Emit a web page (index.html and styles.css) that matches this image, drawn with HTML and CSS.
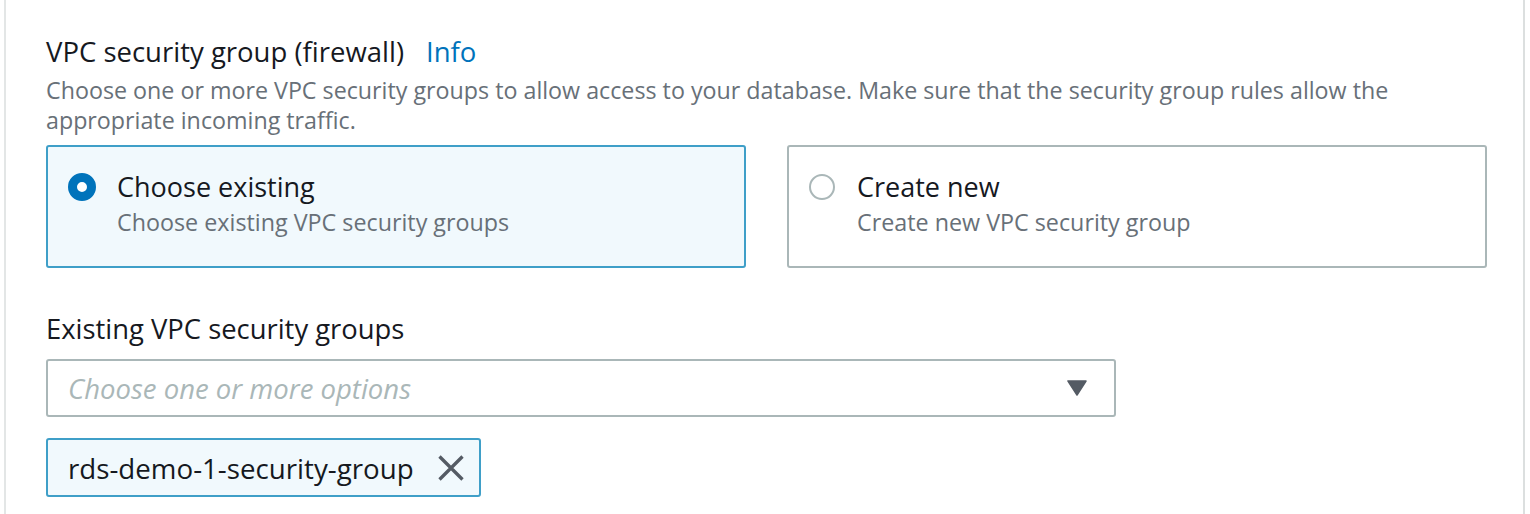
FILE: index.html
```html
<!DOCTYPE html>
<html>
<head>
<meta charset="utf-8">
<link rel="stylesheet" href="styles.css">
</head>
<body>
<div class="panel">
  <div class="header">
    <div class="title-row">
      <span class="title">VPC security group (firewall)</span>
      <a class="info">Info</a>
    </div>
    <div class="desc">Choose one or more VPC security groups to allow access to your database. Make sure that the security group rules allow the appropriate incoming traffic.</div>
  </div>
  <div class="tiles">
    <div class="tile selected">
      <span class="radio on"></span>
      <div class="tile-text">
        <div class="tile-title">Choose existing</div>
        <div class="tile-sub">Choose existing VPC security groups</div>
      </div>
    </div>
    <div class="tile">
      <span class="radio"></span>
      <div class="tile-text">
        <div class="tile-title">Create new</div>
        <div class="tile-sub">Create new VPC security group</div>
      </div>
    </div>
  </div>
  <div class="field">
    <div class="label">Existing VPC security groups</div>
    <div class="select">
      <span class="placeholder">Choose one or more options</span>
      <svg class="caret" width="20" height="16" viewBox="0 0 20 16"><path d="M1 1 H19 L10 15 Z" fill="#545b64" stroke="#545b64" stroke-width="1.5" stroke-linejoin="round"/></svg>
    </div>
    <div class="tokens">
      <div class="token">
        <span class="token-text">rds-demo-1-security-group</span>
        <svg class="dismiss" width="26" height="26" viewBox="0 0 26 26"><path d="M1.5 1.5 L24.5 24.5 M24.5 1.5 L1.5 24.5" stroke="#545b64" stroke-width="3.3" fill="none"/></svg>
      </div>
    </div>
  </div>
</div>
</body>
</html>
```

FILE: styles.css
```css
html, body {
  margin: 0;
  padding: 0;
  background: #ffffff;
}
body {
  font-family: "Open Sans", "Noto Sans", sans-serif;
  color: #16191f;
}
.panel {
  margin-left: 4px;
  width: 1521px;
  height: 514px;
  box-sizing: border-box;
  border-left: 2px solid #e3e6e6;
  border-right: 2px solid #dcdfdf;
  padding: 34px 38px 0 40px;
}
.title-row {
  display: flex;
  align-items: baseline;
  gap: 22px;
  line-height: 36px;
}
.title {
  font-size: 27.5px;
  color: #16191f;
}
.info {
  font-size: 27.5px;
  color: #0073bb;
}
.desc {
  font-size: 23.25px;
  line-height: 30px;
  color: #687078;
  margin-top: 5px;
}
.tiles {
  display: grid;
  grid-template-columns: 700px 700px;
  column-gap: 41px;
  margin-top: 10px;
}
.tile {
  box-sizing: border-box;
  height: 123px;
  border: 2px solid #aab7b8;
  border-radius: 3px;
  display: flex;
  align-items: flex-start;
  padding: 25px 20px 0 20px;
  background: #ffffff;
}
.tile.selected {
  border-color: #3f9fc8;
  background: #f1f9fd;
}
.radio {
  flex: none;
  box-sizing: border-box;
  width: 26px;
  height: 26px;
  border-radius: 50%;
  border: 2px solid #aab7b8;
  background: #fff;
  margin-top: 2px;
  margin-right: 22px;
}
.radio.on {
  border: 9px solid #0073bb;
  width: 28px;
  height: 28px;
  margin-top: 1px;
  margin-right: 21px;
}
.tile-title {
  font-size: 27px;
  line-height: 30px;
  color: #16191f;
}
.tile-sub {
  font-size: 23.3px;
  line-height: 30px;
  color: #687078;
  margin-top: 5px;
}
.field {
  margin-top: 43px;
}
.label {
  font-size: 27.4px;
  line-height: 36px;
  color: #16191f;
}
.select {
  box-sizing: border-box;
  width: 1070px;
  height: 58px;
  margin-top: 12px;
  border: 2px solid #aab7b8;
  border-radius: 3px;
  display: flex;
  align-items: center;
  justify-content: space-between;
  padding: 0 27px 0 20px;
}
.placeholder {
  font-style: italic;
  font-size: 27.5px;
  color: #aab7b8;
}
.caret {
  display: block;
}
.tokens {
  display: flex;
  margin-top: 21px;
}
.token {
  box-sizing: border-box;
  height: 59px;
  border: 2px solid #3f9fc8;
  border-radius: 3px;
  background: #f1f9fd;
  display: flex;
  align-items: center;
  padding: 0 15px 0 20px;
  gap: 24px;
}
.token-text {
  font-size: 27.7px;
  color: #16191f;
}
.dismiss {
  display: block;
}
```
